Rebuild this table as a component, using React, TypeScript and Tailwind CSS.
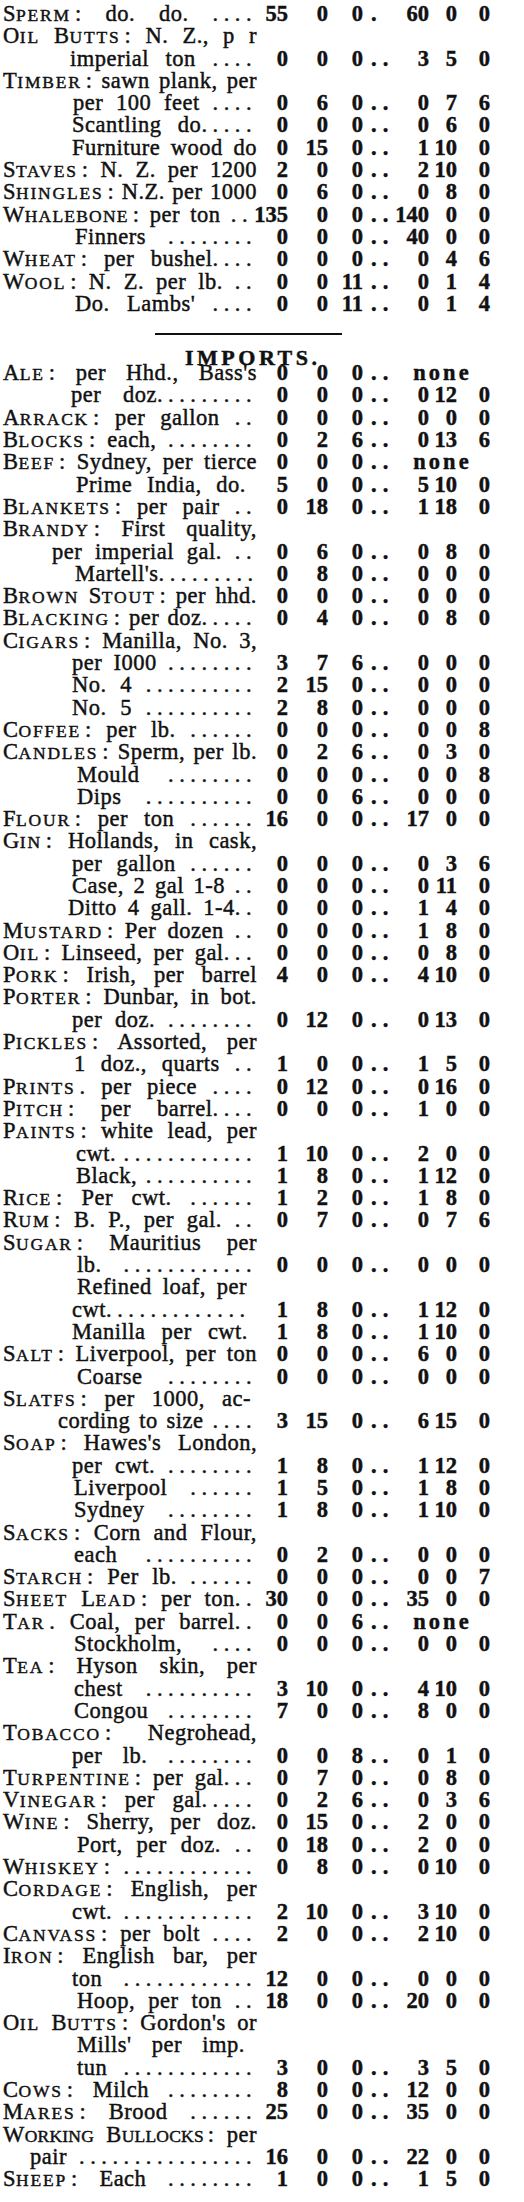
import { Fragment } from "react";

type Row = {
  h?: string; // small-caps head word(s)
  c?: string; // punctuation after the head
  k?: string; // tracking class for a long head
  t?: string; // rest of the label
  i?: string; // indent class
  r?: string; // right padding class
  v?: string[]; // 6 numbers, or 3 numbers + "none"
  s?: string; // separator between the two prices
};

const EXPORTS: Row[] = [
  { h: "Sperm", c: ":", t: "do. do. ....", v: ["55", "0", "0", "60", "0", "0"], s: "." },
  { h: "Oil Butts", c: ":", t: "N. Z., p r" },
  { i: "pl-[67px]", t: "imperial ton ....", v: ["0", "0", "0", "3", "5", "0"] },
  { h: "Timber", c: ":", t: "sawn plank, per" },
  { i: "pl-[70px]", t: "per 100 feet ....", v: ["0", "6", "0", "0", "7", "6"] },
  { i: "pl-[69px]", t: "Scantling do.....", v: ["0", "0", "0", "0", "6", "0"] },
  { i: "pl-[69px]", t: "Furniture wood do", v: ["0", "15", "0", "1", "10", "0"] },
  { h: "Staves", c: ":", t: "N. Z. per 1200", v: ["2", "0", "0", "2", "10", "0"] },
  { h: "Shingles", c: ":", t: "N.Z. per 1000", v: ["0", "6", "0", "0", "8", "0"] },
  { h: "Whalebone", c: ":", k: "tracking-[1.2px]", t: "per ton ..", r: "pr-[4px]", v: ["135", "0", "0", "140", "0", "0"] },
  { i: "pl-[72px]", t: "Finners ........", v: ["0", "0", "0", "40", "0", "0"] },
  { h: "Wheat", c: ":", t: "per bushel....", v: ["0", "0", "0", "0", "4", "6"] },
  { h: "Wool", c: ":", t: "N. Z. per lb. ..", v: ["0", "0", "11", "0", "1", "4"] },
  { i: "pl-[72px]", t: "Do. Lambs' ....", v: ["0", "0", "11", "0", "1", "4"] },
];

const IMPORTS: Row[] = [
  { h: "Ale", c: ":", t: "per Hhd., Bass's", v: ["0", "0", "0", "none"] },
  { i: "pl-[68px]", t: "per doz.........", v: ["0", "0", "0", "0", "12", "0"] },
  { h: "Arrack", c: ":", t: "per gallon ..", v: ["0", "0", "0", "0", "0", "0"] },
  { h: "Blocks", c: ":", t: "each, ........", v: ["0", "2", "6", "0", "13", "6"] },
  { h: "Beef", c: ":", t: "Sydney, per tierce", v: ["0", "0", "0", "none"] },
  { i: "pl-[73px]", r: "pr-[11px]", t: "Prime India, do.", v: ["5", "0", "0", "5", "10", "0"] },
  { h: "Blankets", c: ":", t: "per pair ..", v: ["0", "18", "0", "1", "18", "0"] },
  { h: "Brandy", c: ":", t: "First quality," },
  { i: "pl-[49px]", t: "per imperial gal. ..", v: ["0", "6", "0", "0", "8", "0"] },
  { i: "pl-[72px]", t: "Martell's.........", v: ["0", "8", "0", "0", "0", "0"] },
  { h: "Brown Stout", c: ":", t: "per hhd.", v: ["0", "0", "0", "0", "0", "0"] },
  { h: "Blacking", c: ":", t: "per doz.....", v: ["0", "4", "0", "0", "8", "0"] },
  { h: "Cigars", c: ":", t: "Manilla, No. 3," },
  { i: "pl-[69px]", t: "per I000 ........", v: ["3", "7", "6", "0", "0", "0"] },
  { i: "pl-[69px]", t: "No. 4 ..........", v: ["2", "15", "0", "0", "0", "0"] },
  { i: "pl-[69px]", t: "No. 5 ..........", v: ["2", "8", "0", "0", "0", "0"] },
  { h: "Coffee", c: ":", t: "per lb. ......", v: ["0", "0", "0", "0", "0", "8"] },
  { h: "Candles", c: ":", t: "Sperm, per lb.", v: ["0", "2", "6", "0", "3", "0"] },
  { i: "pl-[74px]", t: "Mould ........", v: ["0", "0", "0", "0", "0", "8"] },
  { i: "pl-[74px]", t: "Dips ..........", v: ["0", "0", "6", "0", "0", "0"] },
  { h: "Flour", c: ":", t: "per ton ......", v: ["16", "0", "0", "17", "0", "0"] },
  { h: "Gin", c: ":", t: "Hollands, in cask," },
  { i: "pl-[69px]", t: "per gallon ......", v: ["0", "0", "0", "0", "3", "6"] },
  { i: "pl-[69px]", t: "Case, 2 gal 1-8 ..", v: ["0", "0", "0", "0", "11", "0"] },
  { i: "pl-[65px]", t: "Ditto 4 gall. 1-4..", v: ["0", "0", "0", "1", "4", "0"] },
  { h: "Mustard", c: ":", t: "Per dozen ..", v: ["0", "0", "0", "1", "8", "0"] },
  { h: "Oil", c: ":", t: "Linseed, per gal...", v: ["0", "0", "0", "0", "8", "0"] },
  { h: "Pork", c: ":", t: "Irish, per barrel", v: ["4", "0", "0", "4", "10", "0"] },
  { h: "Porter", c: ":", t: "Dunbar, in bot." },
  { i: "pl-[69px]", t: "per doz. ........", v: ["0", "12", "0", "0", "13", "0"] },
  { h: "Pickles", c: ":", t: "Assorted, per" },
  { i: "pl-[71px]", t: "1 doz., quarts ..", v: ["1", "0", "0", "1", "5", "0"] },
  { h: "Prints", c: ".", t: "per piece ....", v: ["0", "12", "0", "0", "16", "0"] },
  { h: "Pitch", c: ":", t: "per barrel....", v: ["0", "0", "0", "1", "0", "0"] },
  { h: "Paints", c: ":", t: "white lead, per" },
  { i: "pl-[73px]", t: "cwt. ............", v: ["1", "10", "0", "2", "0", "0"] },
  { i: "pl-[73px]", t: "Black, ..........", v: ["1", "8", "0", "1", "12", "0"] },
  { h: "Rice", c: ":", t: "Per cwt. ......", v: ["1", "2", "0", "1", "8", "0"] },
  { h: "Rum", c: ":", t: "B. P., per gal. ..", v: ["0", "7", "0", "0", "7", "6"] },
  { h: "Sugar", c: ":", t: "Mauritius per" },
  { i: "pl-[74px]", t: "lb. ............", v: ["0", "0", "0", "0", "0", "0"] },
  { i: "pl-[74px]", r: "pr-[10px]", t: "Refined loaf, per" },
  { i: "pl-[69px]", t: "cwt.............", v: ["1", "8", "0", "1", "12", "0"] },
  { i: "pl-[69px]", r: "pr-[9px]", t: "Manilla per cwt.", v: ["1", "8", "0", "1", "10", "0"] },
  { h: "Salt", c: ":", t: "Liverpool, per ton", v: ["0", "0", "0", "6", "0", "0"] },
  { i: "pl-[74px]", t: "Coarse ........", v: ["0", "0", "0", "0", "0", "0"] },
  { h: "Slatfs", c: ":", r: "pr-[6px]", t: "per 1000, ac-" },
  { i: "pl-[55px]", t: "cording to size ....", v: ["3", "15", "0", "6", "15", "0"] },
  { h: "Soap", c: ":", t: "Hawes's London," },
  { i: "pl-[69px]", t: "per cwt. ........", v: ["1", "8", "0", "1", "12", "0"] },
  { i: "pl-[71px]", t: "Liverpool ......", v: ["1", "5", "0", "1", "8", "0"] },
  { i: "pl-[71px]", t: "Sydney ........", v: ["1", "8", "0", "1", "10", "0"] },
  { h: "Sacks", c: ":", t: "Corn and Flour," },
  { i: "pl-[71px]", t: "each ..........", v: ["0", "2", "0", "0", "0", "0"] },
  { h: "Starch", c: ":", t: "Per lb. ......", v: ["0", "0", "0", "0", "0", "7"] },
  { h: "Sheet Lead", c: ":", t: "per ton..", v: ["30", "0", "0", "35", "0", "0"] },
  { h: "Tar", c: ".", t: "Coal, per barrel..", v: ["0", "0", "6", "none"] },
  { i: "pl-[71px]", t: "Stockholm, ....", v: ["0", "0", "0", "0", "0", "0"] },
  { h: "Tea", c: ":", t: "Hyson skin, per" },
  { i: "pl-[71px]", t: "chest ..........", v: ["3", "10", "0", "4", "10", "0"] },
  { i: "pl-[71px]", t: "Congou ........", v: ["7", "0", "0", "8", "0", "0"] },
  { h: "Tobacco", c: ":", t: "Negrohead," },
  { i: "pl-[69px]", t: "per lb. ........", v: ["0", "0", "8", "0", "1", "0"] },
  { h: "Turpentine", c: ":", t: "per gal...", v: ["0", "7", "0", "0", "8", "0"] },
  { h: "Vinegar", c: ":", t: "per gal.....", v: ["0", "2", "6", "0", "3", "6"] },
  { h: "Wine", c: ":", t: "Sherry, per doz.", v: ["0", "15", "0", "2", "0", "0"] },
  { i: "pl-[74px]", t: "Port, per doz. ..", v: ["0", "18", "0", "2", "0", "0"] },
  { h: "Whiskey", c: ":", t: "............", v: ["0", "8", "0", "0", "10", "0"] },
  { h: "Cordage", c: ":", t: "English, per" },
  { i: "pl-[69px]", t: "cwt. ............", v: ["2", "10", "0", "3", "10", "0"] },
  { h: "Canvass", c: ":", t: "per bolt ....", v: ["2", "0", "0", "2", "10", "0"] },
  { h: "Iron", c: ":", t: "English bar, per" },
  { i: "pl-[69px]", t: "ton ............", v: ["12", "0", "0", "0", "0", "0"] },
  { i: "pl-[74px]", t: "Hoop, per ton ..", v: ["18", "0", "0", "20", "0", "0"] },
  { h: "Oil Butts", c: ":", t: "Gordon's or" },
  { i: "pl-[74px]", r: "pr-[12px]", t: "Mills' per imp." },
  { i: "pl-[74px]", t: "tun ............", v: ["3", "0", "0", "3", "5", "0"] },
  { h: "Cows", c: ":", t: "Milch ........", v: ["8", "0", "0", "12", "0", "0"] },
  { h: "Mares", c: ":", t: "Brood ......", v: ["25", "0", "0", "35", "0", "0"] },
  { h: "Working Bullocks", c: ":", k: "tracking-[0.2px]", t: "per" },
  { i: "pl-[27px]", t: "pair ................", v: ["16", "0", "0", "22", "0", "0"] },
  { h: "Sheep", c: ":", t: "Each ........", v: ["1", "0", "0", "1", "5", "0"] },
];

// small caps head: first letter full size, the rest set smaller
function Caps({ text, c, k }: { text: string; c?: string; k?: string }) {
  return (
    <>
      {text.split(" ").map((w, n) => (
        <Fragment key={n}>
          {n > 0 && " "}
          {w[0]}
          <span className={`text-[17.5px] leading-none uppercase ${k ?? "tracking-[1.8px]"}`}>{w.slice(1)}</span>
        </Fragment>
      ))}
      {c && <span className="ml-[4px]">{c}</span>}
    </>
  );
}

// runs of leader dots get spread out like the old type
function Leader({ t }: { t: string }) {
  return (
    <>
      {t.split(/(\.{2,})/).map((p, k) =>
        /^\.{2,}$/.test(p) ? (
          <span key={k} className="tracking-[5.5px]">
            {p}
          </span>
        ) : (
          <Fragment key={k}>{p}</Fragment>
        )
      )}
    </>
  );
}

function Line({ row }: { row: Row }) {
  const v = row.v;
  return (
    <div className="flex h-[22.3px] leading-[22.3px]">
      <div
        className={`w-[254px] shrink-0 text-justify tracking-[0.5px] [text-align-last:justify] ${row.i ?? ""} ${row.r ?? ""}`}
      >
        {row.h && <Caps text={row.h} c={row.c} k={row.k} />}
        {row.h && row.t ? " " : ""}
        {row.t && <Leader t={row.t} />}
      </div>
      {v && (
        <div className="flex font-bold">
          <div className="flex w-[31px] justify-end">{v[0]}</div>
          <div className="flex w-[40px] justify-end">{v[1]}</div>
          <div className="flex w-[35px] justify-end">{v[2]}</div>
          <div className="w-[32px] pl-[8px] tracking-[6px]">{row.s ?? ".."}</div>
          {v.length === 4 ? (
            <div className="w-[95px] text-center tracking-[3px]">{v[3]}</div>
          ) : (
            <>
              <div className="flex w-[34px] justify-end">{v[3]}</div>
              <div className="flex w-[28px] justify-end">{v[4]}</div>
              <div className="flex w-[33px] justify-end">{v[5]}</div>
            </>
          )}
        </div>
      )}
    </div>
  );
}

export default function App() {
  return (
    <div className="min-h-[2202px] w-[524px] bg-white pl-[3px] pt-[3px] font-['Liberation_Serif',serif] text-[22.5px] text-[#111] [-webkit-text-stroke:0.45px_#111]">
      {EXPORTS.map((r, k) => (
        <Line key={k} row={r} />
      ))}

      {/* rule + heading */}
      <div className="mt-[18px] ml-[152px] h-[2px] w-[187px] bg-[#111]" />
      <div className="h-[27px] pl-[182px] pt-[12px] text-[22px] leading-[22px] font-bold tracking-[3.5px]">
        IMPORTS.
      </div>

      {IMPORTS.map((r, k) => (
        <Line key={k} row={r} />
      ))}
    </div>
  );
}
